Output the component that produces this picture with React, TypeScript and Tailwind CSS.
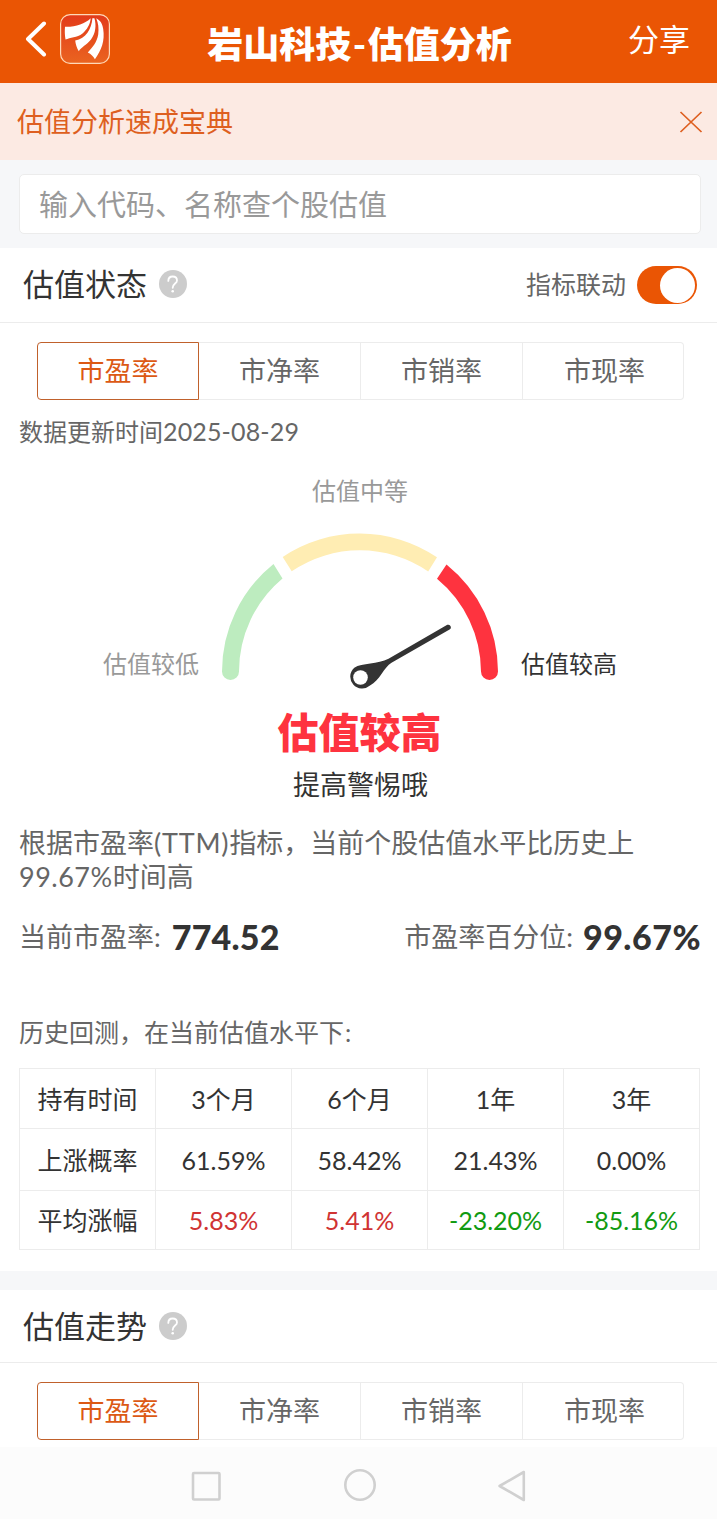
import React, { useState } from 'react';

interface HoldingPeriod {
  label: string;
  probability: string;
  change: string;
}

const metrics = ['市盈率', '市净率', '市销率', '市现率'];

const periods: HoldingPeriod[] = [
  { label: '3个月', probability: '61.59%', change: '5.83%' },
  { label: '6个月', probability: '58.42%', change: '5.41%' },
  { label: '1年', probability: '21.43%', change: '-23.20%' },
  { label: '3年', probability: '0.00%', change: '-85.16%' },
];

const Logo: React.FC = () => (
  <svg className="w-[50px] h-[50px]" viewBox="0 0 50 50">
    <defs>
      <linearGradient id="logo-bg" x1="0" y1="0" x2="0" y2="1">
        <stop offset="0" stopColor="#e23a1a" />
        <stop offset="1" stopColor="#ea6420" />
      </linearGradient>
    </defs>
    <rect x="0.6" y="0.6" width="48.8" height="48.8" rx="9.5" fill="url(#logo-bg)" stroke="#ffd9b8" strokeWidth="1.2" />
    <path d="M30.7 4.3C25 10 15 13.2 5 12.8C4.6 17 4.8 21 5.5 25.6C10 23.4 17 23.800 22.500 19.500C27 15.500 30 11 30.700 4.300Z" fill="#fff" />
    <path d="M32.400 4.300C31.500 15 26 24.500 15.200 26.600C15.600 30.500 16.800 34 18.800 37.200C21 33.500 27 30.500 31 25.500C35.700 19.500 36.500 11 34.400 4.300Z" fill="#fff" />
    <path d="M36.200 4.300C40.500 6.500 42.500 10 43.200 15C45 27 41.500 36 34.900 45.300C33.500 42.300 31 40 27.800 38.400C32.500 33.500 37 28 38.200 20.500C39 14.500 38.300 9 36.200 4.300Z" fill="#fff" />
  </svg>
);

const HelpIcon: React.FC = () => (
  <svg className="w-7 h-7 ml-3" viewBox="0 0 28 28">
    <circle cx="14" cy="14" r="14" fill="#ccc" />
    <path d="M9.300 10.900C9.300 8 11.200 6.500 13.700 6.500C16.200 6.500 18 8.100 18 10.400C18 13.600 13.700 13.600 13.700 17.800" fill="none" stroke="#fff" strokeWidth="1.800" strokeLinecap="round" />
    <circle cx="13.700" cy="21.300" r="1.300" fill="#fff" />
  </svg>
);

const MetricTabs: React.FC = () => {
  const [active, setActive] = useState(0);

  return (
    <div className="grid grid-cols-[162px_162px_162px_161px] mx-[37px] w-[647px] mt-[19px] h-[58px]">
      {metrics.map((metric, index) => (
        <button
          key={metric}
          onClick={() => setActive(index)}
          className={`h-[58px] border text-[27px] leading-[56px] first:rounded-l-[4px] last:rounded-r-[4px] last:pl-[3px] ${
            active === index
              ? 'border-[#c0612c] text-[#dc5914]'
              : 'border-[#ececec] border-l-0 text-[#666]'
          }`}
        >
          {metric}
        </button>
      ))}
    </div>
  );
};

const Gauge: React.FC = () => (
  <svg className="w-[280px] h-[160px] ml-[20px] mr-[21px]" viewBox="220 531 280 160">
    <path d="M222 671.500A138 138 0 0 1 273.500 564L282.500 578.500A121 121 0 0 0 239 671.500A8.500 8.500 0 0 1 222 671.500Z" fill="#bdecbf" />
    <path d="M282.700 556.900A138 138 0 0 1 437 557.300L428.200 571.500A121 121 0 0 0 291.700 571.300Z" fill="#ffedb3" />
    <path d="M446.500 564.500A138 138 0 0 1 498 671.500A8.500 8.500 0 0 1 481 671.500A121 121 0 0 0 437 578.700Z" fill="#fe333f" />
    <path d="M447.300 624.800A2.700 2.700 0 0 1 450 629.300L391.500 662.800C384 667 379.500 681 370 685.500A11.200 11.200 0 1 1 354.300 667.700C362 662.500 378 664.500 388.500 658.700Z" fill="#333" />
    <circle cx="360.500" cy="677.500" r="7.300" fill="#fff" />
  </svg>
);

const App: React.FC = () => {
  const [showBanner, setShowBanner] = useState(true);
  const [linked, setLinked] = useState(true);

  return (
    <div className="w-[717px] h-[1519px] overflow-hidden bg-white flex flex-col text-[#333] font-['Lato','Noto_Sans_CJK_SC',sans-serif]">
      <header className="h-[83px] shrink-0 bg-[#ea5504] text-white flex items-start justify-between pl-[25px] pr-[27px]">
        <div className="flex items-center w-[130px] pt-[14px]">
          <svg className="w-[22px] h-[36px] mr-[13px]" viewBox="0 0 22 36">
            <path d="M19 2.500L3 18L19 33.500" fill="none" stroke="#fff" strokeWidth="4" strokeLinecap="round" strokeLinejoin="round" />
          </svg>
          <Logo />
        </div>
        <h1 className="text-[36px] font-black leading-[52px] pt-[18px] pl-[4px] whitespace-nowrap">
          岩山科技<span className="mx-[1.5px]">-</span>估值分析
        </h1>
        <button className="text-[31px] leading-[46px] pt-[16px] w-[130px] text-right">分享</button>
      </header>

      {showBanner && (
        <div className="h-[77px] shrink-0 bg-[#fceae3] flex items-center justify-between pl-[17px] pr-[14px] text-[27px] text-[#de5f20]">
          <span className="pt-[2px]">估值分析速成宝典</span>
          <button onClick={() => setShowBanner(false)} aria-label="关闭">
            <svg className="w-6 h-6" viewBox="0 0 24 24">
              <path d="M1.500 2L22.500 22M22.500 2L1.500 22" stroke="#de5f20" strokeWidth="1.700" />
            </svg>
          </button>
        </div>
      )}

      <div className="h-[88px] shrink-0 bg-[#f6f7f9] pt-[14px] pl-[19px] pr-4">
        <input
          className="block w-full h-[60px] bg-white border border-[#ececec] rounded-[5px] px-[19px] text-[29px] placeholder:text-[#999] outline-none"
          placeholder="输入代码、名称查个股估值"
        />
      </div>

      <section className="h-[1023px] shrink-0">
        <div className="h-[75px] border-b border-[#ececec] flex items-center justify-between pl-[23px] pr-5">
          <div className="flex items-center pb-[2px]">
            <h2 className="text-[31px] leading-[46px]">估值状态</h2>
            <HelpIcon />
          </div>
          <div className="flex items-center">
            <span className="text-[25px] text-[#666]">指标联动</span>
            <button
              onClick={() => setLinked(!linked)}
              className={`ml-[11px] w-[60px] h-[38px] rounded-full p-[2px] flex items-center ${
                linked ? 'bg-[#ea5504] justify-end' : 'bg-[#ccc] justify-start'
              }`}
              aria-label="指标联动"
            >
              <span className="w-[35px] h-[35px] rounded-full bg-white" />
            </button>
          </div>
        </div>

        <MetricTabs />

        <p className="mt-[14px] h-[36px] ml-[19px] text-[24px] leading-[35px] text-[#666]">
          数据更新时间<span className="text-[25px] tracking-[0.15px]">2025-08-29</span>
        </p>

        <div className="mt-[23px] text-center text-[24px] leading-[36px] text-[#999] pl-[3px]">估值中等</div>
        <div className="mt-[22px] flex text-[24px] leading-[36px] pl-[103px]">
          <span className="w-[97px] pt-[115px] text-[#999]">估值较低</span>
          <Gauge />
          <span className="w-[97px] pt-[115px]">估值较高</span>
        </div>
        <div className="mt-[12px] text-center text-[41px] leading-[60px] font-black text-[#fe333f] pl-[2px]">估值较高</div>
        <div className="mt-[2px] text-center text-[27px] leading-[40px] pl-[4px]">提高警惕哦</div>

        <div className="mt-[21px] ml-[19px] text-[27px] leading-[34px] text-[#666]">
          <p>
            根据市盈率<span className="tracking-[0.8px]">(TTM)</span>指标，当前个股估值水平比历史上
          </p>
          <p>
            <span className="tracking-[0.5px]">99.67%</span>时间高
          </p>
        </div>

        <div className="mt-[17px] h-[50px] flex justify-between items-center pl-[19px] pr-4 text-[27px] leading-[50px] text-[#666]">
          <div className="flex">
            <span className="pt-px">当前市盈率:</span>
            <strong className="ml-[11px] pt-px text-[34px] font-black text-[#333] tracking-[0.2px]">774.52</strong>
          </div>
          <div className="flex">
            <span className="pt-px">市盈率百分位:</span>
            <strong className="ml-[10px] pt-px text-[34px] font-black text-[#333] tracking-[0.5px]">99.67%</strong>
          </div>
        </div>

        <p className="mt-[53px] ml-[19px] text-[25px] leading-[36px] text-[#666]">
          历史回测，在当前估值水平下<span className="ml-px">:</span>
        </p>

        <table className="mt-[18px] ml-[19px] w-[681px] table-fixed border-collapse text-center text-[25px] leading-[36px] [&_td]:border [&_td]:border-[#ececec]">
          <tbody>
            <tr className="h-[60px]">
              <td>持有时间</td>
              {periods.map((period) => (
                <td key={period.label}>{period.label}</td>
              ))}
            </tr>
            <tr className="h-[62px]">
              <td>上涨概率</td>
              {periods.map((period) => (
                <td key={period.label}>{period.probability}</td>
              ))}
            </tr>
            <tr className="h-[59px]">
              <td>平均涨幅</td>
              {periods.map((period) => (
                <td
                  key={period.label}
                  className={period.change.startsWith('-') ? 'text-[#119a11]' : 'text-[#d03333]'}
                >
                  {period.change}
                </td>
              ))}
            </tr>
          </tbody>
        </table>
      </section>

      <section className="h-[176px] shrink-0 border-t-[19px] border-[#f6f7f9]">
        <div className="h-[73px] border-b border-[#ececec] flex items-center pl-[23px]">
          <h2 className="text-[31px] leading-[46px]">估值走势</h2>
          <HelpIcon />
        </div>
        <MetricTabs />
      </section>

      <nav className="h-[72px] shrink-0 bg-[#fcfcfc]">
        <svg className="w-full h-full" viewBox="0 0 717 72" fill="none" stroke="#d0d0d0" strokeWidth="2.600" strokeLinejoin="round">
          <rect x="193" y="26" width="26.500" height="26.500" rx="1" />
          <circle cx="360" cy="38" r="14.700" />
          <path d="M523.800 25L499.600 39L523.800 53Z" />
        </svg>
      </nav>
    </div>
  );
};

export default App;
